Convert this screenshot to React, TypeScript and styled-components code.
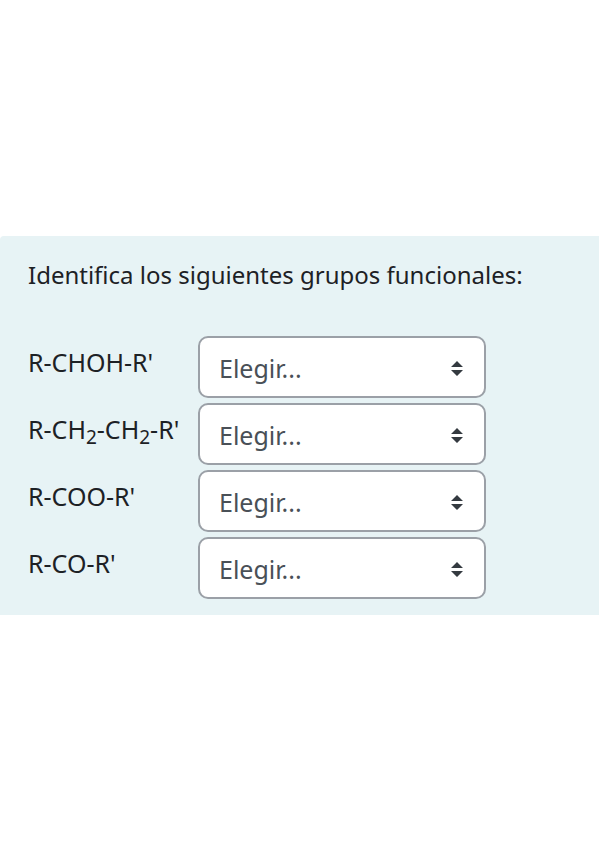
import React from "react";
import styled, { createGlobalStyle } from "styled-components";

const GlobalStyle = createGlobalStyle`
  html, body {
    margin: 0;
    padding: 0;
    background: #ffffff;
  }
  body {
    font-family: "Noto Sans", "Open Sans", sans-serif;
    color: #1d2125;
  }
`;

const Page = styled.div`
  padding-top: 236px;
`;

const Panel = styled.section`
  background: #e7f3f5;
  border-top-left-radius: 4px;
  padding: 22px 28px 16px 28px;
`;

const Title = styled.p`
  margin: 0 0 44px 0;
  font-size: 24px;
  line-height: 34px;
  color: #1d2125;
`;

const Grid = styled.div`
  display: grid;
  grid-template-columns: 170px 288px;
  row-gap: 5px;
`;

const Label = styled.div`
  align-self: center;
  padding-bottom: 11px;
  font-size: 25px;
  line-height: 32px;
  color: #1d2125;
  white-space: nowrap;

  sub {
    font-size: 19px;
    line-height: 0;
    vertical-align: -5px;
  }
`;

const SelectBox = styled.button`
  box-sizing: border-box;
  height: 62px;
  width: 100%;
  margin: 0;
  display: flex;
  align-items: center;
  justify-content: space-between;
  padding: 2px 21px 0 19px;
  background: #ffffff;
  border: 2px solid #9ba0a7;
  border-radius: 10px;
  font-family: "Noto Sans", "Open Sans", sans-serif;
  font-size: 25px;
  color: #495057;
  cursor: pointer;
  text-align: left;
`;

const Arrow = () => (
  <svg width="12" height="15" viewBox="0 0 4 5" aria-hidden="true">
    <path fill="#343a40" d="M2 0L0 2h4zm0 5L0 3h4z" />
  </svg>
);

type Row = { id: string; label: React.ReactNode };

const rows: Row[] = [
  { id: "a", label: "R-CHOH-R'" },
  {
    id: "b",
    label: (
      <>
        R-CH<sub>2</sub>-CH<sub>2</sub>-R'
      </>
    ),
  },
  { id: "c", label: "R-COO-R'" },
  { id: "d", label: "R-CO-R'" },
];

export default function App() {
  return (
    <>
      <GlobalStyle />
      <Page>
        <Panel>
          <Title>Identifica los siguientes grupos funcionales:</Title>
          <Grid>
            {rows.map((r) => (
              <React.Fragment key={r.id}>
                <Label>{r.label}</Label>
                <SelectBox type="button">
                  <span>Elegir...</span>
                  <Arrow />
                </SelectBox>
              </React.Fragment>
            ))}
          </Grid>
        </Panel>
      </Page>
    </>
  );
}
